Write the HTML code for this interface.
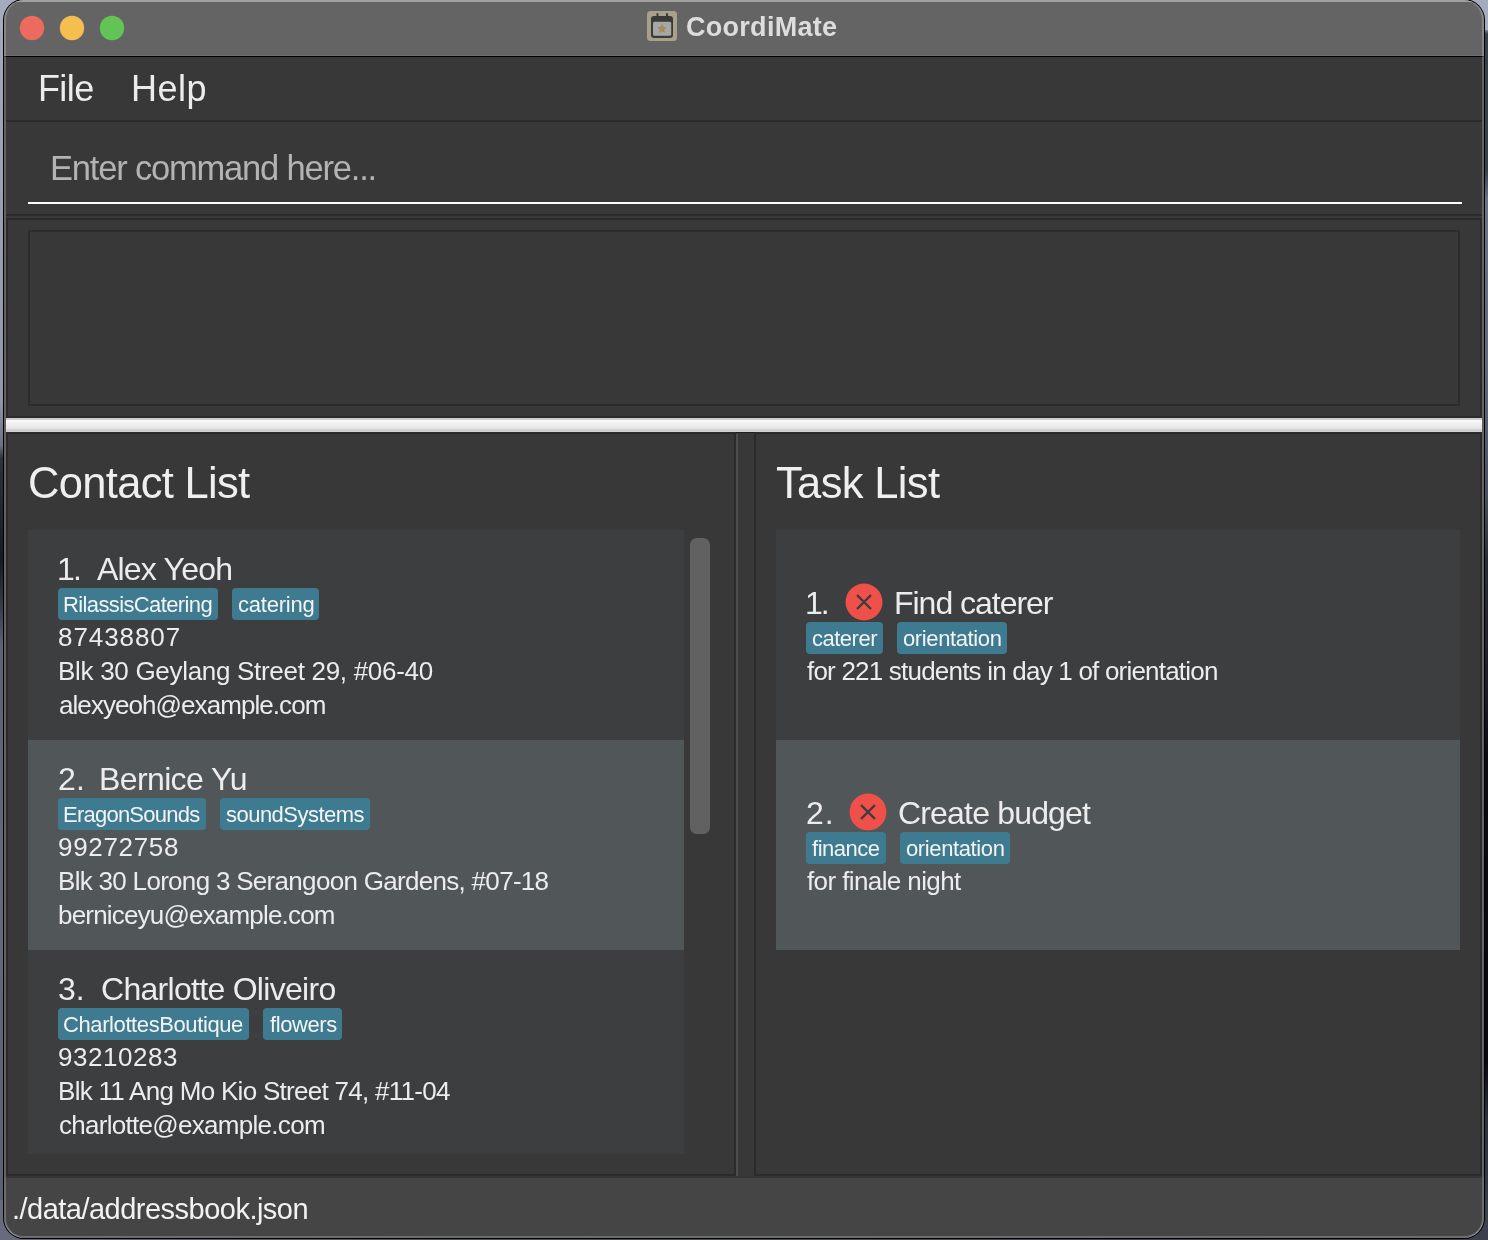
<!DOCTYPE html>
<html><head><meta charset="utf-8"><title>CoordiMate</title>
<style>
html,body{margin:0;padding:0;width:1488px;height:1240px;overflow:hidden;background:#3a3e4b;}
body{position:relative;font-family:"Liberation Sans",sans-serif;}
.a{position:absolute;}
.t{position:absolute;white-space:pre;font-family:"Liberation Sans",sans-serif;will-change:transform;}
</style></head><body>
<!-- desktop -->
<div class="a" style="left:0;top:0;width:40px;height:1240px;background:linear-gradient(to bottom,#a5a9bc 0px,#9296a9 400px,#6e7184 445px,#2e3240 458px,#151a26 560px,#3a3e4e 610px,#5e6274 645px,#66697c 900px,#5c5f72 1240px);"></div>
<div class="a" style="left:1448px;top:0;width:40px;height:1240px;background:linear-gradient(to bottom,#a3a8bb 0px,#a3a8bb 28px,#3b3f4c 34px,#3b3f4c 170px,#6d7186 200px,#62667a 380px,#4a4d5c 500px,#2a2c35 560px,#1a1b22 700px,#0a0b0f 760px,#08090c 1060px,#2e313c 1120px,#3c404d 1240px);"></div>
<div class="a" style="left:0;top:1200px;width:1488px;height:40px;background:linear-gradient(to right,#686b7e 0%,#50535f 30%,#3c404d 100%);"></div>
<div class="a" style="left:0;top:0;width:1488px;height:30px;background:#a6aabd;"></div>
<!-- window -->
<div class="a" style="left:3px;top:-1px;width:1482px;height:1239.5px;border-radius:21px;background:#000;overflow:hidden;">
 <div class="a" style="left:1px;top:1px;width:1480px;height:1237.5px;border-radius:20px;background:#383838;overflow:hidden;">
  <!-- title bar -->
  <div class="a" style="left:0;top:0;width:1480px;height:56px;background:#646464;"></div>
  <div class="a" style="left:0;top:0;width:1480px;height:2px;background:#a0a0a0;"></div>
  <div class="a" style="left:0;top:55px;width:1480px;height:1px;background:#6e6e6e;"></div>
  <div class="a" style="left:0;top:56px;width:1480px;height:1px;background:#000;"></div>
  <!-- status bar -->
  <div class="a" style="left:0;top:1178px;width:1480px;height:60px;background:#454545;"></div>
  <!-- side highlights -->
  <div class="a" style="left:0;top:0;width:1480px;height:1237.5px;border-radius:20px;box-shadow:inset 2px 0 0 rgba(255,255,255,0.22),inset -2px 0 0 rgba(255,255,255,0.22),inset 0 -2px 0 rgba(255,255,255,0.22);pointer-events:none;z-index:5;"></div>
 </div>
</div>
<!-- content in page coords -->
<!-- menu bottom line -->
<div class="a" style="left:6px;top:120px;width:1476px;height:2px;background:#2b2b2b;"></div>
<!-- command underline -->
<div class="a" style="left:28px;top:202px;width:1434px;height:2px;background:#ffffff;"></div>
<div class="a" style="left:6px;top:214px;width:1476px;height:2px;background:#2b2b2b;"></div>
<!-- result pane border -->
<div class="a" style="left:6px;top:218px;width:1472px;height:196px;border:2px solid #2b2b2b;"></div>
<div class="a" style="left:28px;top:230px;width:1428px;height:172px;border:2px solid #2b2b2b;"></div>
<!-- white split bar -->
<div class="a" style="left:6px;top:418px;width:1476px;height:14px;background:linear-gradient(to bottom,#cecece 0px,#cecece 2px,#fbfbfb 2px,#e3e3e3 11px,#c8c8c8 12px,#d6d6d6 14px);"></div>
<div class="a" style="left:6px;top:432px;width:1476px;height:1px;background:#1e1e1e;"></div>
<!-- lower panes -->
<div class="a" style="left:6px;top:432px;width:726px;height:740px;border:2px solid #2b2b2b;"></div>
<div class="a" style="left:736px;top:434px;width:2px;height:742px;background:#4e4e4e;"></div>
<div class="a" style="left:754px;top:432px;width:724px;height:740px;border:2px solid #2b2b2b;"></div>
<div class="a" style="left:6px;top:1176px;width:1476px;height:2px;background:#363636;"></div>
<!-- contact list cells -->
<div class="a" style="left:28px;top:530px;width:656px;height:624px;overflow:hidden;">
 <div class="a" style="left:0;top:0;width:656px;height:210px;background:#3c3e3f;"></div>
 <div class="a" style="left:0;top:210px;width:656px;height:210px;background:#515658;"></div>
 <div class="a" style="left:0;top:420px;width:656px;height:210px;background:#3c3e3f;"></div>
</div>
<!-- scrollbar thumb -->
<div class="a" style="left:690px;top:538px;width:20px;height:296px;border-radius:6.5px;background:#616161;"></div>
<!-- task list cells -->
<div class="a" style="left:776px;top:530px;width:684px;height:210px;background:#3c3e3f;"></div>
<div class="a" style="left:776px;top:740px;width:684px;height:210px;background:#515658;"></div>
<!-- traffic lights -->
<svg class="a" style="left:0;top:0;" width="1488" height="1240" viewBox="0 0 1488 1240">
 <circle cx="32" cy="28" r="12.2" fill="#ed6a5e"/>
 <circle cx="72" cy="28" r="12.2" fill="#f4bf4f"/>
 <circle cx="112" cy="28" r="12.2" fill="#61c454"/>
 <!-- app icon -->
 <rect x="647" y="11" width="30" height="30" rx="3.5" fill="#a7a18a"/>
 <rect x="651" y="16" width="22" height="22" rx="3" fill="#3a3a3a"/>
 <rect x="653" y="21.8" width="18.2" height="14" rx="1.5" fill="#a7a7a7"/>
 <rect x="656.5" y="13" width="2" height="5" rx="1" fill="#3a3a3a"/>
 <rect x="666" y="13" width="2" height="5" rx="1" fill="#3a3a3a"/>
 <path d="M662.00 24.60 L663.12 27.36 L666.09 27.57 L663.81 29.49 L664.53 32.38 L662.00 30.80 L659.47 32.38 L660.19 29.49 L657.91 27.57 L660.88 27.36 Z" fill="#a38d55" stroke="#a38d55" stroke-width="0.8" stroke-linejoin="round"/>
 <circle cx="864" cy="602" r="18.5" fill="#f0504a"/><path d="M857 595 L871 609 M871 595 L857 609" stroke="#3d3d3d" stroke-width="2.4" stroke-linecap="butt"/><circle cx="868" cy="812" r="18.5" fill="#f0504a"/><path d="M861 805 L875 819 M875 805 L861 819" stroke="#3d3d3d" stroke-width="2.4" stroke-linecap="butt"/>
</svg>
<div style="position:absolute;left:58px;top:588px;width:160px;height:32px;background:#3e7b91;border-radius:4px;"></div>
<div style="position:absolute;left:232px;top:588px;width:87px;height:32px;background:#3e7b91;border-radius:4px;"></div>
<div style="position:absolute;left:58px;top:798px;width:148px;height:32px;background:#3e7b91;border-radius:4px;"></div>
<div style="position:absolute;left:220px;top:798px;width:150px;height:32px;background:#3e7b91;border-radius:4px;"></div>
<div style="position:absolute;left:58px;top:1008px;width:191px;height:32px;background:#3e7b91;border-radius:4px;"></div>
<div style="position:absolute;left:263px;top:1008px;width:79px;height:32px;background:#3e7b91;border-radius:4px;"></div>
<div style="position:absolute;left:806px;top:622px;width:77px;height:32px;background:#3e7b91;border-radius:4px;"></div>
<div style="position:absolute;left:897px;top:622px;width:110px;height:32px;background:#3e7b91;border-radius:4px;"></div>
<div style="position:absolute;left:806px;top:832px;width:80px;height:32px;background:#3e7b91;border-radius:4px;"></div>
<div style="position:absolute;left:900px;top:832px;width:110px;height:32px;background:#3e7b91;border-radius:4px;"></div>
<div class="t" style="left:685.92px;top:14.14px;font-size:27px;line-height:27px;letter-spacing:0.281px;color:#dddddd;font-weight:bold;">CoordiMate</div>
<div class="t" style="left:38.12px;top:70.53px;font-size:36px;line-height:36px;letter-spacing:-0.620px;color:#ececec;">File</div>
<div class="t" style="left:130.72px;top:70.53px;font-size:36px;line-height:36px;letter-spacing:0.513px;color:#ececec;">Help</div>
<div class="t" style="left:50.04px;top:150.80px;font-size:34.5px;line-height:34.5px;letter-spacing:-1.190px;color:#b3b3b3;">Enter command here...</div>
<div class="t" style="left:27.93px;top:462.18px;font-size:43.5px;line-height:43.5px;letter-spacing:-0.690px;color:#efefef;">Contact List</div>
<div class="t" style="left:776.43px;top:462.18px;font-size:43.5px;line-height:43.5px;letter-spacing:-0.651px;color:#efefef;">Task List</div>
<div class="t" style="left:57.20px;top:552.91px;font-size:32px;line-height:32px;letter-spacing:-1.880px;color:#ececec;">1.</div>
<div class="t" style="left:96.90px;top:552.91px;font-size:32px;line-height:32px;letter-spacing:-0.802px;color:#ececec;">Alex Yeoh</div>
<div class="t" style="left:63.24px;top:594.38px;font-size:22px;line-height:22px;letter-spacing:-0.617px;color:#f4f4f4;">RilassisCatering</div>
<div class="t" style="left:237.72px;top:594.38px;font-size:22px;line-height:22px;letter-spacing:-0.214px;color:#f4f4f4;">catering</div>
<div class="t" style="left:58.43px;top:623.99px;font-size:26px;line-height:26px;letter-spacing:0.924px;color:#ececec;">87438807</div>
<div class="t" style="left:57.52px;top:657.99px;font-size:26px;line-height:26px;letter-spacing:-0.301px;color:#ececec;">Blk 30 Geylang Street 29, #06-40</div>
<div class="t" style="left:58.56px;top:691.99px;font-size:26px;line-height:26px;letter-spacing:-0.935px;color:#ececec;">alexyeoh@example.com</div>
<div class="t" style="left:58.00px;top:762.91px;font-size:32px;line-height:32px;letter-spacing:0.320px;color:#ececec;">2.</div>
<div class="t" style="left:98.84px;top:762.91px;font-size:32px;line-height:32px;letter-spacing:-0.616px;color:#ececec;">Bernice Yu</div>
<div class="t" style="left:62.64px;top:804.38px;font-size:22px;line-height:22px;letter-spacing:-0.764px;color:#f4f4f4;">EragonSounds</div>
<div class="t" style="left:225.84px;top:804.38px;font-size:22px;line-height:22px;letter-spacing:-0.526px;color:#f4f4f4;">soundSystems</div>
<div class="t" style="left:58.43px;top:833.99px;font-size:26px;line-height:26px;letter-spacing:0.673px;color:#ececec;">99272758</div>
<div class="t" style="left:57.52px;top:867.99px;font-size:26px;line-height:26px;letter-spacing:-0.696px;color:#ececec;">Blk 30 Lorong 3 Serangoon Gardens, #07-18</div>
<div class="t" style="left:57.91px;top:901.99px;font-size:26px;line-height:26px;letter-spacing:-0.811px;color:#ececec;">berniceyu@example.com</div>
<div class="t" style="left:58.32px;top:972.91px;font-size:32px;line-height:32px;letter-spacing:0.000px;color:#ececec;">3.</div>
<div class="t" style="left:100.50px;top:972.91px;font-size:32px;line-height:32px;letter-spacing:-0.707px;color:#ececec;">Charlotte Oliveiro</div>
<div class="t" style="left:63.30px;top:1014.38px;font-size:22px;line-height:22px;letter-spacing:-0.401px;color:#f4f4f4;">CharlottesBoutique</div>
<div class="t" style="left:269.67px;top:1014.38px;font-size:22px;line-height:22px;letter-spacing:-0.407px;color:#f4f4f4;">flowers</div>
<div class="t" style="left:58.43px;top:1043.99px;font-size:26px;line-height:26px;letter-spacing:0.530px;color:#ececec;">93210283</div>
<div class="t" style="left:57.52px;top:1077.99px;font-size:26px;line-height:26px;letter-spacing:-0.715px;color:#ececec;">Blk 11 Ang Mo Kio Street 74, #11-04</div>
<div class="t" style="left:58.56px;top:1111.99px;font-size:26px;line-height:26px;letter-spacing:-0.709px;color:#ececec;">charlotte@example.com</div>
<div class="t" style="left:805.30px;top:586.91px;font-size:32px;line-height:32px;letter-spacing:-2.080px;color:#ececec;">1.</div>
<div class="t" style="left:893.84px;top:586.91px;font-size:32px;line-height:32px;letter-spacing:-1.025px;color:#ececec;">Find caterer</div>
<div class="t" style="left:811.52px;top:628.38px;font-size:22px;line-height:22px;letter-spacing:-0.502px;color:#f4f4f4;">caterer</div>
<div class="t" style="left:902.52px;top:628.38px;font-size:22px;line-height:22px;letter-spacing:-0.383px;color:#f4f4f4;">orientation</div>
<div class="t" style="left:806.51px;top:657.99px;font-size:26px;line-height:26px;letter-spacing:-0.792px;color:#ececec;">for 221 students in day 1 of orientation</div>
<div class="t" style="left:806.40px;top:796.91px;font-size:32px;line-height:32px;letter-spacing:0.920px;color:#ececec;">2.</div>
<div class="t" style="left:898.10px;top:796.91px;font-size:32px;line-height:32px;letter-spacing:-0.822px;color:#ececec;">Create budget</div>
<div class="t" style="left:812.27px;top:838.38px;font-size:22px;line-height:22px;letter-spacing:-0.472px;color:#f4f4f4;">finance</div>
<div class="t" style="left:905.92px;top:838.38px;font-size:22px;line-height:22px;letter-spacing:-0.383px;color:#f4f4f4;">orientation</div>
<div class="t" style="left:806.51px;top:867.99px;font-size:26px;line-height:26px;letter-spacing:-0.604px;color:#ececec;">for finale night</div>
<div class="t" style="left:11.79px;top:1195.45px;font-size:29px;line-height:29px;letter-spacing:-0.515px;color:#f2f2f2;">./data/addressbook.json</div>
</body></html>
